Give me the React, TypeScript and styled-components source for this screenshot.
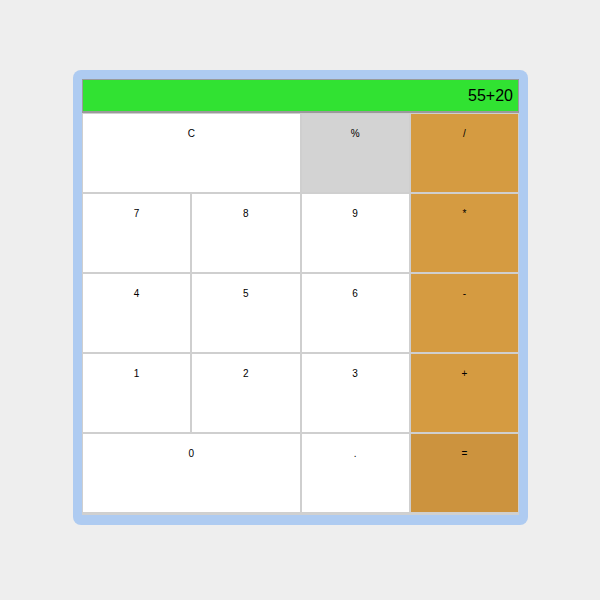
import React from 'react';
import styled, { createGlobalStyle } from 'styled-components';

const keys: { label: string; kind: 'num' | 'fn' | 'op' | 'eq'; span?: number }[] = [
  { label: 'C', kind: 'num', span: 2 },
  { label: '%', kind: 'fn' },
  { label: '/', kind: 'op' },
  { label: '7', kind: 'num' },
  { label: '8', kind: 'num' },
  { label: '9', kind: 'num' },
  { label: '*', kind: 'op' },
  { label: '4', kind: 'num' },
  { label: '5', kind: 'num' },
  { label: '6', kind: 'num' },
  { label: '-', kind: 'op' },
  { label: '1', kind: 'num' },
  { label: '2', kind: 'num' },
  { label: '3', kind: 'num' },
  { label: '+', kind: 'op' },
  { label: '0', kind: 'num', span: 2 },
  { label: '.', kind: 'num' },
  { label: '=', kind: 'eq' },
];

const colours = {
  num: '#ffffff',
  fn: '#d3d3d3',
  op: '#d59b41',
  eq: '#cc933e',
};

const App = () => {
  return (
    <Page>
      <GlobalStyle />
      <Calculator>
        <Display>55+20</Display>
        <Keypad>
          {keys.map((k) => (
            <Key key={k.label} $kind={k.kind} $span={k.span || 1}>
              {k.label}
            </Key>
          ))}
        </Keypad>
      </Calculator>
    </Page>
  );
};

const GlobalStyle = createGlobalStyle`
  html, body {
    margin: 0;
    padding: 0;
    background: #eeeeee;
    font-family: 'Liberation Sans', Arial, sans-serif;
  }
`;

const Page = styled.div`
  width: 600px;
  height: 600px;
  display: flex;
  justify-content: flex-start;
  align-items: flex-start;
  padding: 70px 0 0 73px;
  box-sizing: border-box;
`;

const Calculator = styled.div`
  width: 437px;
  padding: 9px 9px 10px 9px;
  background: #aecbf1;
  border-radius: 8px;
`;

const Display = styled.div`
  height: 34px;
  box-sizing: border-box;
  background: #31e232;
  border: 1px solid #9a9a9a;
  border-bottom-width: 2px;
  font-size: 16px;
  line-height: 32px;
  text-align: right;
  padding-right: 5px;
  color: #000;
`;

const Keypad = styled.div`
  display: grid;
  grid-template-columns: repeat(4, 1fr);
  grid-auto-rows: 80px;
  background: #fff;
  border-bottom: 2px solid #d0d0d0;
`;

const Key = styled.button<{ $kind: 'num' | 'fn' | 'op' | 'eq'; $span: number }>`
  grid-column: span ${(p) => p.$span};
  background: ${(p) => colours[p.$kind]};
  border: 1px solid #cfcfcf;
  margin: 0;
  padding: 14px 0 0 0;
  display: flex;
  justify-content: center;
  align-items: flex-start;
  font-family: 'Liberation Sans', Arial, sans-serif;
  font-size: 10px;
  color: #000;
  cursor: pointer;
`;

export default App;
